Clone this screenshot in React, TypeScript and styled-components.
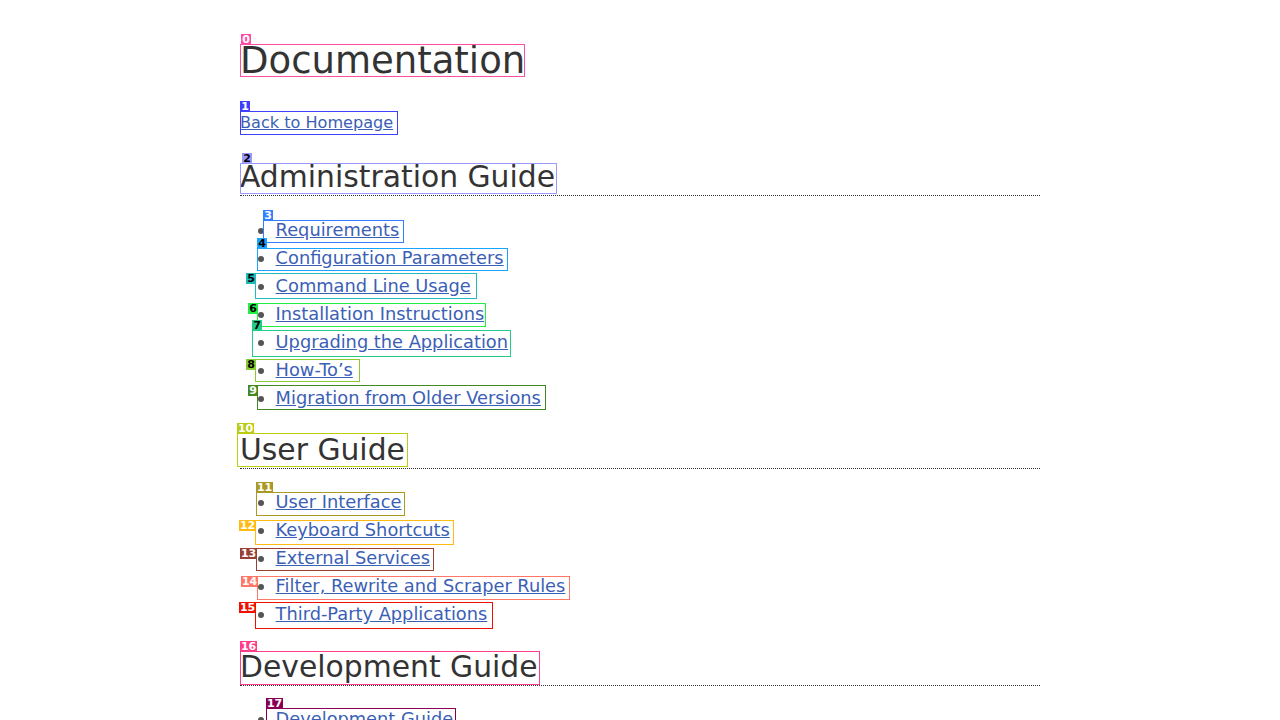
import React from "react";
import styled, { createGlobalStyle } from "styled-components";

const Global = createGlobalStyle`
  html, body {
    margin: 0;
    padding: 0;
    background: #ffffff;
    overflow: hidden;
  }
  body {
    font-family: "DejaVu Sans", "Liberation Sans", sans-serif;
    font-size: 16px;
    color: #333333;
  }
`;

const Page = styled.main`
  width: 800px;
  margin: 0 auto;
  padding-top: 1px;
`;

const Title = styled.h1`
  margin: 38px 0 0;
  font-size: 37px;
  font-weight: 400;
  line-height: 1.2;
  color: #333333;
`;

const BackLine = styled.p`
  margin: 28px 0 0;
  line-height: 24px;
  font-size: 16.1px;
`;

const Link = styled.a`
  color: #3a60b6;
  text-decoration: underline;
`;

const SectionTitle = styled.h2<{ $first?: boolean }>`
  margin: ${(p) => (p.$first ? "24px" : "20.5px")} 0 0;
  font-size: 29.8px;
  font-weight: 400;
  line-height: 1.2;
  color: #333333;
  border-bottom: 1px dotted #333333;
`;

const List = styled.ul`
  margin: 19.5px 0 0;
  padding-left: 2em;
  font-size: 17.8px;
  line-height: 28px;
  list-style: disc;
`;

const Item = styled.li`
  color: #555555;
`;

const Overlay = styled.div`
  position: absolute;
  left: 0;
  top: 0;
  width: 1280px;
  height: 720px;
  pointer-events: none;
`;

const Box = styled.div<{ $x: number; $y: number; $w: number; $h: number; $c: string }>`
  position: absolute;
  left: ${(p) => p.$x}px;
  top: ${(p) => p.$y}px;
  width: ${(p) => p.$w}px;
  height: ${(p) => p.$h}px;
  box-sizing: border-box;
  border: 1px solid ${(p) => p.$c};
`;

const Tag = styled.div<{ $x: number; $y: number; $c: string; $dark?: boolean }>`
  position: absolute;
  left: ${(p) => p.$x}px;
  top: ${(p) => p.$y}px;
  height: 11px;
  min-width: 10px;
  padding: 0 1px;
  box-sizing: border-box;
  background: ${(p) => p.$c};
  color: ${(p) => (p.$dark ? "#000000" : "#ffffff")};
  font-family: "DejaVu Sans", sans-serif;
  font-weight: 700;
  font-size: 11px;
  line-height: 11px;
  letter-spacing: -0.2px;
  text-align: center;
`;

type Mark = {
  n: number;
  x: number;
  y: number;
  w: number;
  h: number;
  lx: number;
  ly: number;
  c: string;
  dark?: boolean;
};

const marks: Mark[] = [
  { n: 0, x: 240, y: 44, w: 285, h: 33, lx: 241, ly: 34, c: "#ff4da6" },
  { n: 1, x: 240, y: 111, w: 158, h: 24, lx: 240, ly: 101, c: "#3f3fff" },
  { n: 2, x: 240, y: 163, w: 317, h: 31, lx: 242, ly: 153, c: "#9999ff", dark: true },
  { n: 3, x: 263, y: 220, w: 141, h: 23, lx: 263, ly: 210, c: "#3380ff" },
  { n: 4, x: 257, y: 248, w: 251, h: 23, lx: 257, ly: 238, c: "#1aa3ff", dark: true },
  { n: 5, x: 255, y: 273, w: 222, h: 26, lx: 246, ly: 273, c: "#22bbbb", dark: true },
  { n: 6, x: 257, y: 303, w: 229, h: 24, lx: 248, ly: 303, c: "#22ee44", dark: true },
  { n: 7, x: 252, y: 330, w: 259, h: 27, lx: 252, ly: 320, c: "#22cc88", dark: true },
  { n: 8, x: 255, y: 359, w: 105, h: 23, lx: 246, ly: 359, c: "#88cc33", dark: true },
  { n: 9, x: 257, y: 385, w: 289, h: 25, lx: 248, ly: 385, c: "#448822" },
  { n: 10, x: 237, y: 433, w: 171, h: 34, lx: 237, ly: 423, c: "#bbcc11" },
  { n: 11, x: 256, y: 492, w: 149, h: 24, lx: 256, ly: 482, c: "#aa9922" },
  { n: 12, x: 255, y: 520, w: 199, h: 25, lx: 239, ly: 520, c: "#ffbb11" },
  { n: 13, x: 256, y: 548, w: 178, h: 23, lx: 240, ly: 548, c: "#993f33" },
  { n: 14, x: 257, y: 576, w: 313, h: 24, lx: 241, ly: 576, c: "#ff7766" },
  { n: 15, x: 255, y: 602, w: 238, h: 27, lx: 239, ly: 602, c: "#ee1100" },
  { n: 16, x: 240, y: 651, w: 300, h: 34, lx: 240, ly: 641, c: "#ff3d8b" },
  { n: 17, x: 266, y: 708, w: 190, h: 30, lx: 266, ly: 698, c: "#880055" },
];

const sections: { title: string; items: string[] }[] = [
  {
    title: "Administration Guide",
    items: [
      "Requirements",
      "Configuration Parameters",
      "Command Line Usage",
      "Installation Instructions",
      "Upgrading the Application",
      "How-To’s",
      "Migration from Older Versions",
    ],
  },
  {
    title: "User Guide",
    items: [
      "User Interface",
      "Keyboard Shortcuts",
      "External Services",
      "Filter, Rewrite and Scraper Rules",
      "Third-Party Applications",
    ],
  },
  {
    title: "Development Guide",
    items: ["Development Guide", "API Reference", "Internationalization"],
  },
];

export default function App() {
  return (
    <>
      <Global />
      <Page>
        <Title>Documentation</Title>
        <BackLine>
          <Link href="#">Back to Homepage</Link>
        </BackLine>
        {sections.map((s, i) => (
          <React.Fragment key={s.title}>
            <SectionTitle $first={i === 0}>{s.title}</SectionTitle>
            <List>
              {s.items.map((it) => (
                <Item key={it}>
                  <Link href="#">{it}</Link>
                </Item>
              ))}
            </List>
          </React.Fragment>
        ))}
      </Page>
      <Overlay>
        {marks.map((m) => (
          <React.Fragment key={m.n}>
            <Box $x={m.x} $y={m.y} $w={m.w} $h={m.h} $c={m.c} />
            <Tag $x={m.lx} $y={m.ly} $c={m.c} $dark={m.dark}>
              {m.n}
            </Tag>
          </React.Fragment>
        ))}
      </Overlay>
    </>
  );
}
